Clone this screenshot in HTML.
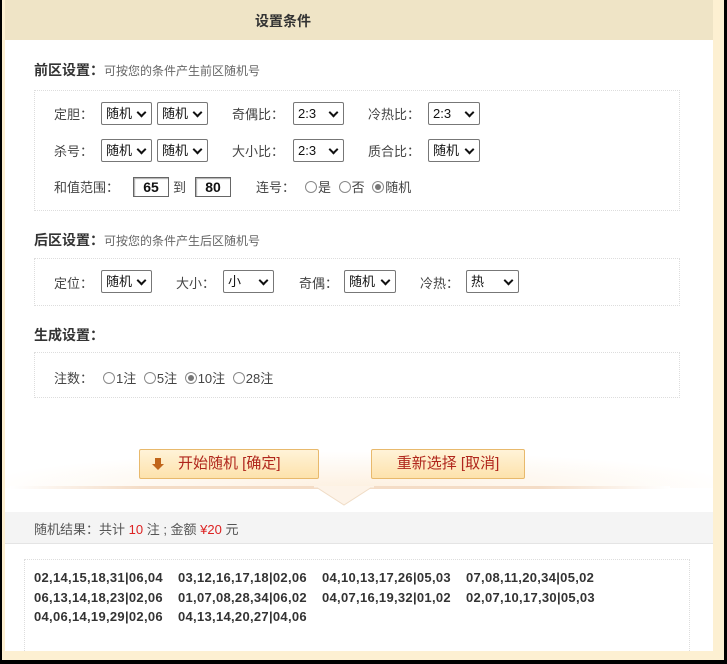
<!DOCTYPE html>
<html><head><meta charset="utf-8"><style>
*{margin:0;padding:0;box-sizing:border-box}
body{width:727px;height:664px;background:#000;position:relative;overflow:hidden;font-family:"Liberation Sans","Noto Sans CJK SC",sans-serif;font-size:13px;color:#333}
.a{position:absolute;white-space:nowrap}
#frame{position:absolute;left:2px;top:0;width:722px;height:660px;background:#fdf0d2}
#panel{position:absolute;left:5px;top:0;width:708px;height:651px;background:#fff}
#hd{position:absolute;left:5px;top:0;width:708px;height:40px;background:#efe4c6}
.box{position:absolute;left:34px;width:646px;border:1px dotted #ddd}
.sel{position:absolute;height:23px;border:1px solid #777;border-radius:2px;background:#fff;font-size:13px;line-height:21px;padding-left:4px;color:#111}
.sel:after{content:"";position:absolute;right:6px;top:6px;width:5px;height:5px;border-right:2px solid #111;border-bottom:2px solid #111;transform:rotate(45deg)}
.inp{position:absolute;height:20px;border:1px solid #666;box-shadow:inset 1px 1px 1px #aaa;font-weight:bold;font-size:14px;line-height:18px;text-align:center;color:#111}
.r{display:inline-block;width:12px;height:12px;border:1px solid #888;border-radius:50%;vertical-align:-1px;margin:0 1px 0 4px;position:relative;background:#fff}
.r.on:after{content:"";position:absolute;left:2px;top:2px;width:6px;height:6px;border-radius:50%;background:#777}
.btn{position:absolute;top:449px;height:30px;border:1px solid #e8b96c;border-radius:2px;background:linear-gradient(#fff3d8,#fde2ac);color:#b0261c;font-size:15px;line-height:28px}
.res{font-weight:bold;font-size:13px;color:#333;letter-spacing:0.3px}
.res span{display:inline-block;width:144px}
</style></head><body>
<div id="frame"></div>
<div id="panel"></div>
<div id="hd"></div>
<div class="a" style="left:255px;top:11px;font-size:14px;font-weight:bold;color:#333">设置条件</div>

<div class="a" style="left:34px;top:60px"><b style="font-size:14px">前区设置：</b><span style="font-size:12px;color:#666">可按您的条件产生前区随机号</span></div>
<div class="box" style="top:90px;height:121px"></div>
<div class="a" style="left:54px;top:104px;color:#444">定胆：</div>
<div class="sel" style="left:101px;top:102px;width:51px">随机</div>
<div class="sel" style="left:157px;top:102px;width:51px">随机</div>
<div class="a" style="left:232px;top:104px;color:#444">奇偶比：</div>
<div class="sel" style="left:293px;top:102px;width:51px">2:3</div>
<div class="a" style="left:368px;top:104px;color:#444">冷热比：</div>
<div class="sel" style="left:428px;top:102px;width:52px">2:3</div>

<div class="a" style="left:54px;top:141px;color:#444">杀号：</div>
<div class="sel" style="left:101px;top:139px;width:51px">随机</div>
<div class="sel" style="left:157px;top:139px;width:51px">随机</div>
<div class="a" style="left:232px;top:141px;color:#444">大小比：</div>
<div class="sel" style="left:293px;top:139px;width:51px">2:3</div>
<div class="a" style="left:368px;top:141px;color:#444">质合比：</div>
<div class="sel" style="left:428px;top:139px;width:52px">随机</div>

<div class="a" style="left:54px;top:177px;color:#444">和值范围：</div>
<div class="inp" style="left:133px;top:177px;width:36px">65</div>
<div class="a" style="left:173px;top:177px;color:#444">到</div>
<div class="inp" style="left:195px;top:177px;width:36px">80</div>
<div class="a" style="left:256px;top:177px;color:#444">连号：<span class="r" style="margin-left:10px"></span>是 <span class="r"></span>否 <span class="r on"></span>随机</div>

<div class="a" style="left:34px;top:230px"><b style="font-size:14px">后区设置：</b><span style="font-size:12px;color:#666">可按您的条件产生后区随机号</span></div>
<div class="box" style="top:258px;height:48px"></div>
<div class="a" style="left:54px;top:273px;color:#444">定位：</div>
<div class="sel" style="left:101px;top:270px;width:51px">随机</div>
<div class="a" style="left:176px;top:273px;color:#444">大小：</div>
<div class="sel" style="left:223px;top:270px;width:51px">小</div>
<div class="a" style="left:299px;top:273px;color:#444">奇偶：</div>
<div class="sel" style="left:344px;top:270px;width:52px">随机</div>
<div class="a" style="left:420px;top:273px;color:#444">冷热：</div>
<div class="sel" style="left:466px;top:270px;width:53px">热</div>

<div class="a" style="left:34px;top:325px"><b style="font-size:14px">生成设置：</b></div>
<div class="box" style="top:352px;height:46px"></div>
<div class="a" style="left:54px;top:368px;color:#444">注数：<span class="r" style="margin-left:10px"></span>1注 <span class="r"></span>5注 <span class="r on"></span>10注 <span class="r"></span>28注</div>

<div class="a" style="left:5px;top:430px;width:708px;height:58px;background:radial-gradient(ellipse 60% 70% at 50% 100%,#fdf0e0,#fff 90%)"></div>
<div class="a" style="left:10px;top:486px;width:660px;height:3px;background:linear-gradient(90deg,#fff,#f4dcc6 20%,#f4dcc6 80%,#fff)"></div>
<svg class="a" style="left:314px;top:486px" width="60" height="22"><polygon points="2,1 58,1 30,19" fill="#fdf3e8" stroke="#f0dcc6"/><rect x="0" y="0" width="60" height="1.5" fill="#fdf3e8"/></svg>
<div class="btn" style="left:139px;width:180px;padding-left:38px">开始随机 [确定]</div>
<svg class="a" style="left:151px;top:457px" width="14" height="14"><path d="M4 1h6v6h3l-6 6l-6-6h3z" fill="#c0651a"/></svg>
<div class="btn" style="left:371px;width:154px;text-align:center">重新选择 [取消]</div>

<div class="a" style="left:5px;top:512px;width:708px;height:32px;background:#f4f4f4;border-bottom:1px solid #e4e4e4"></div>
<div class="a" style="left:34px;top:519px;font-size:13px;color:#555">随机结果：共计 <span style="color:#d22">10</span> 注 ; 金额 <span style="color:#d22">¥20</span> 元</div>

<div class="box" style="left:24px;top:559px;width:666px;height:100px"></div>
<div class="a res" style="left:34px;top:568px;line-height:19.5px"><span>02,14,15,18,31|06,04</span><span>03,12,16,17,18|02,06</span><span>04,10,13,17,26|05,03</span><span>07,08,11,20,34|05,02</span><br><span>06,13,14,18,23|02,06</span><span>01,07,08,28,34|06,02</span><span>04,07,16,19,32|01,02</span><span>02,07,10,17,30|05,03</span><br><span>04,06,14,19,29|02,06</span><span>04,13,14,20,27|04,06</span></div>

<div class="a" style="left:2px;top:651px;width:722px;height:9px;background:#fdf0d2"></div>
</body></html>
